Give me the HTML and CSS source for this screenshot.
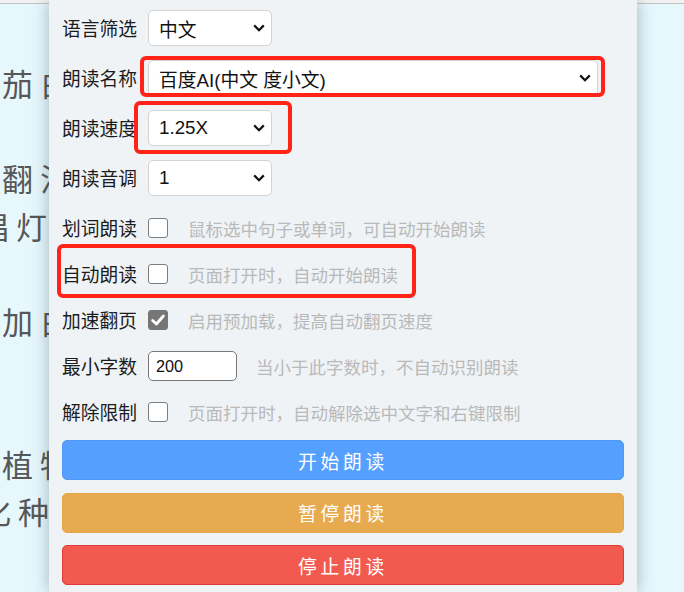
FILE: index.html
```html
<!DOCTYPE html>
<html lang="zh-CN">
<head>
<meta charset="utf-8">
<title>朗读设置</title>
<link rel="stylesheet" href="styles.css">
</head>
<body>
<div class="page">
  <div class="article">
    <div class="line">茄白</div>
    <div class="line"></div>
    <div class="line">翻法</div>
    <div class="line shift1">唱灯</div>
    <div class="line"></div>
    <div class="line">加白</div>
    <div class="line"></div>
    <div class="line"></div>
    <div class="line">植物</div>
    <div class="line shift2">化种</div>
    <div class="line"></div>
    <div class="line shift3">之</div>
  </div>
</div>

<div class="panel">
  <div class="row row-select">
    <span class="label">语言筛选</span>
    <div class="select">
      <span class="select-text">中文</span>
      <svg class="chev" viewBox="0 0 12 8" width="12" height="8"><path d="M1.2 1.4 L6 6.2 L10.8 1.4" fill="none" stroke="#111" stroke-width="2.2"/></svg>
    </div>
  </div>
  <div class="row row-select">
    <span class="label">朗读名称</span>
    <div class="select select-wide">
      <span class="select-text">百度AI(中文 度小文)</span>
      <svg class="chev" viewBox="0 0 12 8" width="12" height="8"><path d="M1.2 1.4 L6 6.2 L10.8 1.4" fill="none" stroke="#111" stroke-width="2.2"/></svg>
    </div>
  </div>
  <div class="row row-select">
    <span class="label">朗读速度</span>
    <div class="select">
      <span class="select-text">1.25X</span>
      <svg class="chev" viewBox="0 0 12 8" width="12" height="8"><path d="M1.2 1.4 L6 6.2 L10.8 1.4" fill="none" stroke="#111" stroke-width="2.2"/></svg>
    </div>
  </div>
  <div class="row row-select">
    <span class="label">朗读音调</span>
    <div class="select">
      <span class="select-text">1</span>
      <svg class="chev" viewBox="0 0 12 8" width="12" height="8"><path d="M1.2 1.4 L6 6.2 L10.8 1.4" fill="none" stroke="#111" stroke-width="2.2"/></svg>
    </div>
  </div>
  <div class="row row-check">
    <span class="label">划词朗读</span>
    <span class="box"></span>
    <span class="desc">鼠标选中句子或单词，可自动开始朗读</span>
  </div>
  <div class="row row-check">
    <span class="label">自动朗读</span>
    <span class="box"></span>
    <span class="desc">页面打开时，自动开始朗读</span>
  </div>
  <div class="row row-check">
    <span class="label">加速翻页</span>
    <span class="box checked"><svg viewBox="0 0 20 20" width="20" height="20"><path d="M4.6 10.4 L8.4 14 L15.4 6" fill="none" stroke="#fff" stroke-width="2.8" stroke-linecap="round" stroke-linejoin="round"/></svg></span>
    <span class="desc">启用预加载，提高自动翻页速度</span>
  </div>
  <div class="row row-check">
    <span class="label">最小字数</span>
    <span class="input">200</span>
    <span class="desc desc-input">当小于此字数时，不自动识别朗读</span>
  </div>
  <div class="row row-check">
    <span class="label">解除限制</span>
    <span class="box"></span>
    <span class="desc">页面打开时，自动解除选中文字和右键限制</span>
  </div>
  <div class="buttons">
    <div class="btn btn-blue">开始朗读</div>
    <div class="btn btn-orange">暂停朗读</div>
    <div class="btn btn-red">停止朗读</div>
  </div>
</div>

<div class="mark mark-name"></div>
<div class="mark mark-speed"></div>
<div class="mark mark-auto"></div>
</body>
</html>
```

FILE: styles.css
```css
html, body {
  margin: 0;
  padding: 0;
  height: 100%;
  overflow: hidden;
  background: #f2f2f2;
  font-family: "Liberation Sans", "Noto Sans CJK SC", sans-serif;
}

.page {
  margin-top: 3px;
  border-top: 1px solid #c4c4c4;
  height: 588px;
  background: #e7f8fd;
  overflow: hidden;
}

.article {
  width: 49px;
  overflow: hidden;
  padding-top: 55px;
  font-family: "Noto Sans CJK SC", sans-serif;
  font-size: 31px;
  letter-spacing: 7px;
  color: #575757;
  line-height: 47.6px;
  white-space: nowrap;
}

.line {
  height: 47.6px;
  padding-left: 2px;
}

.shift1 { text-indent: -24px; }
.shift2 { text-indent: -22px; }
.shift3 { text-indent: 0; }

.panel {
  position: absolute;
  left: 49px;
  top: 0;
  width: 562px;
  height: 582px;
  padding: 10px 13px 0 13px;
  background: #eff3f6;
  box-shadow: 0 0 16px rgba(40, 70, 80, 0.38);
  font-family: "Noto Sans CJK SC", sans-serif;
  color: #1a1a1a;
}

.row {
  display: flex;
  align-items: center;
  height: 36px;
}

.row-select { margin-bottom: 14px; }
.row-check { margin-bottom: 10px; }

.label {
  width: 86px;
  flex: none;
  font-size: 18.75px;
  line-height: 36px;
  color: #1c1c1c;
}

.select {
  box-sizing: border-box;
  width: 124px;
  height: 36px;
  display: flex;
  align-items: center;
  justify-content: space-between;
  padding: 0 6px 0 10px;
  background: #fff;
  border: 1px solid #d2d2d2;
  border-radius: 5px;
}

.select-wide { width: 450px; }

.select-text {
  font-family: "Liberation Sans", "Noto Sans CJK SC", sans-serif;
  font-size: 18.75px;
  color: #111;
  white-space: nowrap;
}

.chev { display: block; flex: none; }

.box {
  box-sizing: border-box;
  width: 20px;
  height: 20px;
  flex: none;
  border: 1px solid #7d7d7d;
  border-radius: 3px;
  background: #fff;
}

.box.checked {
  border-color: #767676;
  background: #767676;
}

.box svg { display: block; margin: -1px; }

.desc {
  margin-left: 20px;
  font-size: 17.5px;
  color: #b9b9b9;
  white-space: nowrap;
}

.desc-input { margin-left: 19px; }

.input {
  box-sizing: border-box;
  width: 89px;
  height: 30px;
  flex: none;
  display: flex;
  align-items: center;
  padding-left: 7px;
  background: #fff;
  border: 1px solid #777;
  border-radius: 5px;
  font-family: "Liberation Sans", sans-serif;
  font-size: 16.25px;
  color: #111;
}

.buttons {
  margin-top: 1px;
  display: flex;
  flex-direction: column;
  gap: 12.5px;
}

.btn {
  box-sizing: border-box;
  height: 40px;
  display: flex;
  align-items: center;
  justify-content: center;
  border-radius: 5px;
  color: #fff;
  font-size: 18.75px;
  letter-spacing: 3.75px;
}

.btn-blue { background: #55a0ff; border: 1px solid #4f98f4; }
.btn-orange { background: #e8aa4e; border: 1px solid #e4a548; }
.btn-red { background: #f25a4f; border: 1px solid #e23a3a; }

.mark {
  position: absolute;
  box-sizing: border-box;
  border: 4px solid #ff2318;
  border-radius: 6px;
}

.mark-name { left: 140px; top: 56px; width: 465px; height: 41px; }
.mark-speed { left: 134px; top: 101px; width: 158px; height: 53px; }
.mark-auto { left: 57px; top: 244px; width: 359px; height: 54px; }
```
